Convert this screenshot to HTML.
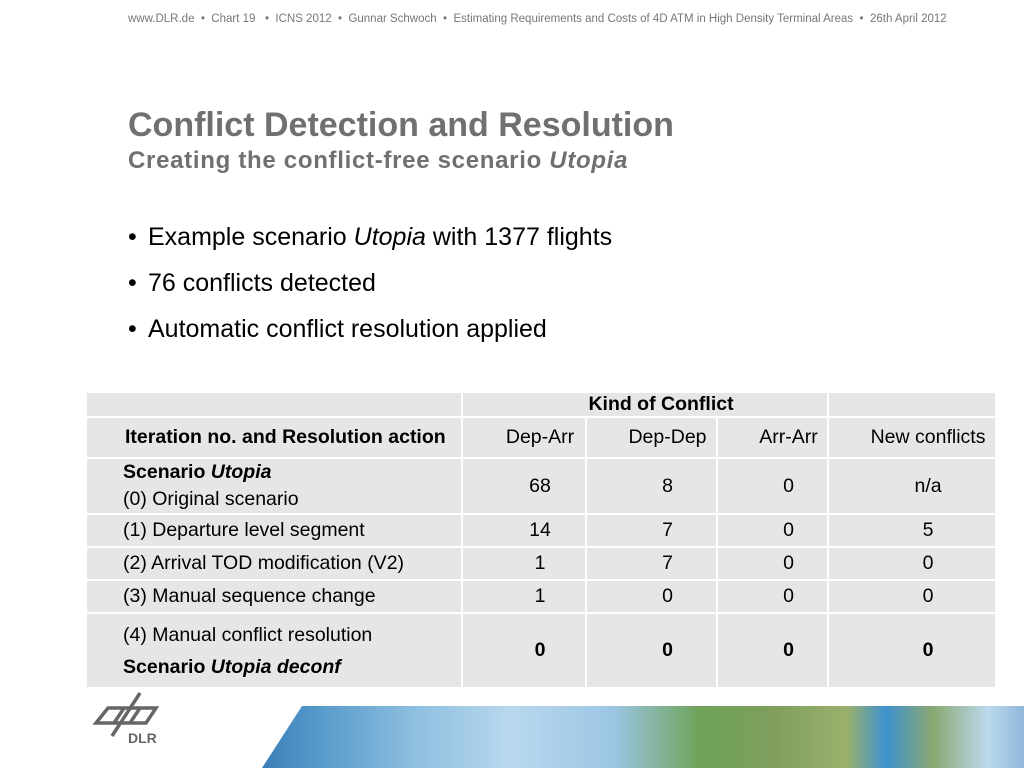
<!DOCTYPE html>
<html><head><meta charset="utf-8"><style>
body{margin:0;width:1024px;height:768px;background:#fff;position:relative;overflow:hidden;font-family:"Liberation Sans",Arial,sans-serif;}
.hdr{position:absolute;left:128px;top:13px;font-size:11.5px;color:#777;white-space:pre;}
.t1{position:absolute;left:128px;top:106px;font-size:34px;font-weight:bold;color:#707070;}
.t2{position:absolute;left:128px;top:147px;font-size:24px;font-weight:bold;color:#707070;letter-spacing:0.7px;}
.b{position:absolute;left:128px;font-size:25px;color:#000;}
.b span{display:inline-block;width:20px;}
table{position:absolute;left:85px;top:391px;border-collapse:collapse;font-size:19.5px;table-layout:fixed;width:910px;}
td{background:#e6e6e6;border:2px solid #fff;padding:0 0 0 32px;text-align:center;white-space:nowrap;}
td.l{text-align:left;padding-left:36px;}
.earth{position:absolute;left:262px;top:706px;width:780px;height:62px;
background:linear-gradient(90deg,#3a7fb8 0%,#5a9ccc 8%,#8fc0e0 20%,#b9d8ee 32%,#9cc6e4 45%,#6fa35a 56%,#7e9e5c 65%,#9ab06c 75%,#3f92d0 80%,#8aa870 86%,#bcd9ee 93%,#7aa8d0 100%);
clip-path:polygon(40px 0,100% 0,100% 100%,0 100%);}
</style></head><body>
<div class="hdr">www.DLR.de  •  Chart 19   •  ICNS 2012  •  Gunnar Schwoch  •  Estimating Requirements and Costs of 4D ATM in High Density Terminal Areas  •  26th April 2012</div>
<div class="t1">Conflict Detection and Resolution</div>
<div class="t2">Creating the conflict-free scenario <i>Utopia</i></div>
<div class="b" style="top:223px"><span>•</span>Example scenario <i>Utopia</i> with 1377 flights</div>
<div class="b" style="top:269px"><span>•</span>76 conflicts detected</div>
<div class="b" style="top:315px"><span>•</span>Automatic conflict resolution applied</div>
<table>
<colgroup><col style="width:376px"><col style="width:124px"><col style="width:131px"><col style="width:111px"><col style="width:168px"></colgroup>
<tr style="height:25px"><td style="padding:0"></td><td colspan="3" style="font-weight:bold">Kind of Conflict</td><td></td></tr>
<tr style="height:41px"><td style="font-weight:bold;text-align:left;padding-left:38px">Iteration no. and Resolution action</td><td>Dep-Arr</td><td>Dep-Dep</td><td>Arr-Arr</td><td>New conflicts</td></tr>
<tr style="height:56px"><td class="l" style="line-height:27px"><b>Scenario <i>Utopia</i></b><br>(0) Original scenario</td><td>68</td><td>8</td><td>0</td><td>n/a</td></tr>
<tr style="height:33px"><td class="l">(1) Departure level segment</td><td>14</td><td>7</td><td>0</td><td>5</td></tr>
<tr style="height:33px"><td class="l">(2) Arrival TOD modification (V2)</td><td>1</td><td>7</td><td>0</td><td>0</td></tr>
<tr style="height:33px"><td class="l">(3) Manual sequence change</td><td>1</td><td>0</td><td>0</td><td>0</td></tr>
<tr style="height:75px"><td class="l" style="line-height:32px">(4) Manual conflict resolution<br><b>Scenario <i>Utopia deconf</i></b></td><td><b>0</b></td><td><b>0</b></td><td><b>0</b></td><td><b>0</b></td></tr>
</table>
<svg style="position:absolute;left:90px;top:690px" width="72" height="58" viewBox="0 0 72 58">
<g fill="none" stroke="#666" stroke-width="3.5">
<path d="M50 3 L22 46"/>
<path d="M18 18 L66 18 L56 33 L6 33 Z"/>
<path d="M34 18 L24 33 M50 18 L40 33"/>
</g>
<text x="38" y="53" font-family="Liberation Sans" font-weight="bold" font-size="14" fill="#666">DLR</text>
</svg>
<div class="earth"></div>
</body></html>
